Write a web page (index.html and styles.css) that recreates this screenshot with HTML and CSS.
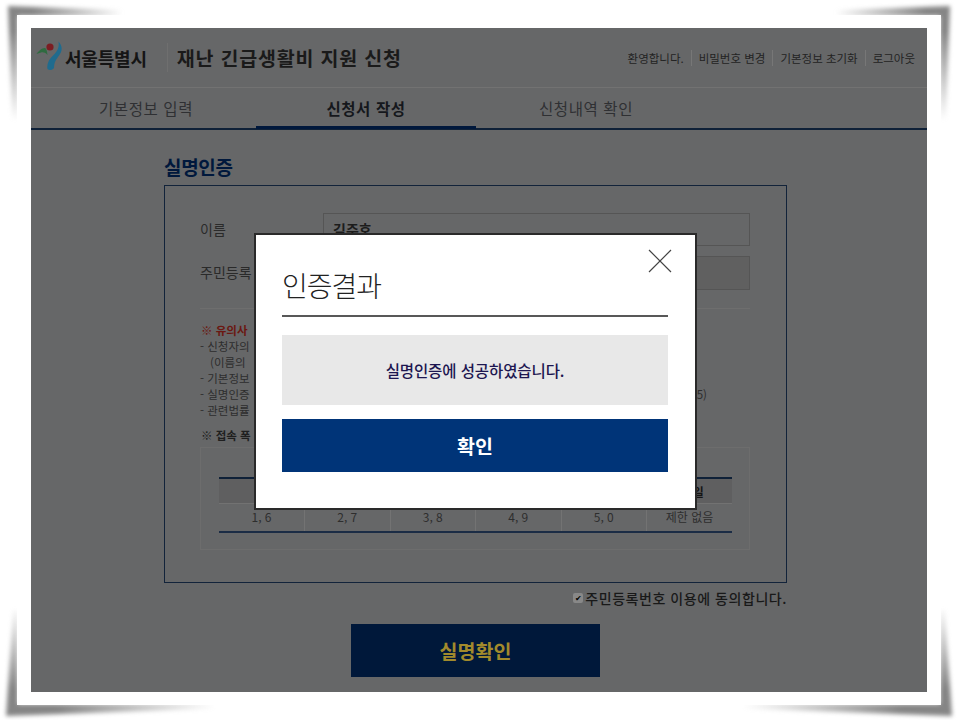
FILE: index.html
```html
<!DOCTYPE html>
<html lang="ko">

<head>
    <meta charset="UTF-8">
    <title>재난 긴급생활비 지원 신청</title>
    <link rel="stylesheet" href="styles.css">
</head>

<body>
    <div class="frame-shadow">
        <div class="curl curl-top"></div>
        <div class="curl curl-top curl-flip"></div>
        <div class="curl curl-bottom"></div>
        <div class="curl curl-bottom curl-flip"></div>
    </div>
    <div class="frame">
        <div class="page">
            <!-- Header -->
            <header class="header">
                <div class="brand">
                    <svg class="logo" viewBox="0 0 26 30" width="26" height="30">
                        <path d="M0.5 13C3 9.5 6.500 6.500 9 7C10.500 7.500 11 10 11.500 14C9.500 11.500 7 11 5 11.500C3.500 11.800 2 12.500 0.500 13Z" fill="#2f6b40" />
                        <circle cx="14" cy="6" r="3.600" fill="#7c1d22" />
                        <path d="M22.500 0.500C27 5 26.500 11 22 16C19 19.500 18 23 18 27C16 29.500 13 29.500 11.500 28C10.500 23 13 18 17.500 14C21 10.500 23.500 7 22.500 0.500Z" fill="#1f6b8e" />
                    </svg>
                    <span class="brand-name">서울특별시</span>
                    <span class="brand-title">재난 긴급생활비 지원 신청</span>
                </div>
                <ul class="user-menu">
                    <li>환영합니다.</li>
                    <li>비밀번호 변경</li>
                    <li>기본정보 초기화</li>
                    <li>로그아웃</li>
                </ul>
            </header>

            <!-- Tabs -->
            <nav class="tabs">
                <a class="tab">기본정보 입력</a>
                <a class="tab active">신청서 작성</a>
                <a class="tab">신청내역 확인</a>
            </nav>

            <!-- Real name check -->
            <main class="content">
                <h2 class="section-title">실명인증</h2>
                <div class="check-box">
                    <div class="form-row">
                        <label>이름</label>
                        <div class="field">김주호</div>
                    </div>
                    <div class="form-row">
                        <label>주민등록</label>
                        <div class="field field-disabled"></div>
                    </div>
                    <div class="notes">
                        <p class="notes-title">※ 유의사</p>
                        <p>- 신청자의</p>
                        <p class="indent">(이름의</p>
                        <p>- 기본정보</p>
                        <p class="note-split"><span>- 실명인증</span><span>5)</span></p>
                        <p>- 관련법률</p>
                    </div>
                    <p class="notes-title dark">※ 접속 폭</p>
                    <div class="table-box">
                        <table class="day-table">
                            <tr>
                                <th></th>
                                <th></th>
                                <th></th>
                                <th></th>
                                <th></th>
                                <th>토, 일</th>
                            </tr>
                            <tr>
                                <td>1, 6</td>
                                <td>2, 7</td>
                                <td>3, 8</td>
                                <td>4, 9</td>
                                <td>5, 0</td>
                                <td>제한 없음</td>
                            </tr>
                        </table>
                    </div>
                </div>
                <label class="agree"><span class="agree-check">✔</span>주민등록번호 이용에 동의합니다.</label>
                <button class="submit-btn">실명확인</button>
            </main>

            <!-- Result popup -->
            <div class="modal">
                <svg class="modal-close" viewBox="0 0 24 24" width="24" height="24">
                    <path d="M1 1L23 23M23 1L1 23" stroke="#444" stroke-width="1.200" fill="none" />
                </svg>
                <h3 class="modal-title">인증결과</h3>
                <div class="modal-msg">실명인증에 성공하였습니다.</div>
                <button class="modal-btn">확인</button>
            </div>
        </div>
    </div>
</body>

</html>
```

FILE: styles.css
```css
/* General Styles */
body {
    margin: 0;
    background-color: #fff;
    font-family: "Noto Sans CJK KR", "Noto Sans", sans-serif;
    position: relative;
    height: 720px;
    overflow: hidden;
}

p {
    margin: 0;
}

/* Curled shadow around the picture frame */
.frame-shadow {
    position: absolute;
    inset: 0;
    filter: blur(2px);
}

.curl {
    position: absolute;
    inset: 0;
    background-color: #858585;
}

.curl-top {
    clip-path: polygon(8px 6px, 150px 11px, 150px 16px, 18px 16px, 18px 120px, 12px 120px);
    -webkit-mask-image: radial-gradient(circle at 8px 6px, #000 25px, transparent 115px);
    mask-image: radial-gradient(circle at 8px 6px, #000 25px, transparent 115px);
}

.curl-bottom {
    clip-path: polygon(6px 716px, 230px 708px, 230px 704px, 18px 704px, 18px 610px, 13px 610px);
    -webkit-mask-image: radial-gradient(ellipse 210px 110px at 6px 716px, #000 25%, transparent 100%);
    mask-image: radial-gradient(ellipse 210px 110px at 6px 716px, #000 25%, transparent 100%);
}

.curl-flip {
    transform: scaleX(-1);
}

.frame {
    position: relative;
    width: 896px;
    height: 664px;
    margin: 15px 0 0 17px;
    padding: 13px 14px;
    background-color: #fff;
}

.page {
    position: relative;
    height: 664px;
    overflow: hidden;
    background-color: #666768;
    color: #222;
}

/* Header */
.header {
    display: flex;
    justify-content: space-between;
    align-items: center;
    height: 60px;
    box-sizing: border-box;
    padding: 0 12px 0 5px;
    border-bottom: 1px solid #727272;
}

.brand {
    display: flex;
    align-items: center;
}

.logo {
    margin-top: -4px;
}

.brand-name {
    margin-left: 3px;
    font-size: 18px;
    font-weight: 700;
    letter-spacing: -0.200px;
    color: #151515;
}

.brand-title {
    margin-left: 20px;
    padding-left: 9px;
    border-left: 1px solid #6f6f6f;
    font-size: 19.500px;
    font-weight: 700;
    letter-spacing: 0.800px;
    color: #1a1a1a;
}

.user-menu {
    display: flex;
    margin: 0;
    padding: 0;
    list-style: none;
    font-size: 11.500px;
    color: #232323;
}

.user-menu li + li {
    margin-left: 7px;
    padding-left: 7px;
    border-left: 1px solid #777;
}

/* Tabs */
.tabs {
    display: flex;
    height: 42px;
    box-sizing: border-box;
    padding-left: 5px;
    border-bottom: 2px solid #0f2138;
}

.tab {
    width: 220px;
    height: 40px;
    box-sizing: border-box;
    text-align: center;
    line-height: 40px;
    font-size: 15.500px;
    letter-spacing: 0.600px;
    color: #2f3033;
}

.tab.active {
    height: 41px;
    border-bottom: 3px solid #00183c;
    font-weight: 700;
    color: #15171c;
}

/* Content */
.content {
    display: flex;
    flex-direction: column;
    width: 623px;
    margin-left: 133px;
}

.section-title {
    margin: 25px 0 7px;
    height: 23px;
    line-height: 23px;
    font-size: 19px;
    font-weight: 700;
    letter-spacing: -0.300px;
    color: #00183c;
}

.check-box {
    height: 398px;
    box-sizing: border-box;
    padding: 27px 36px 0 35px;
    border: 1px solid #12233a;
}

.form-row {
    display: flex;
    align-items: center;
    margin-bottom: 10px;
}

.form-row label {
    width: 123px;
    font-size: 14px;
    margin-top: -2px;
    color: #2a2a2a;
}

.field {
    width: 427px;
    height: 33px;
    box-sizing: border-box;
    padding-left: 9px;
    line-height: 31px;
    border: 1px solid #555;
    font-size: 14px;
    font-weight: 700;
    color: #1c1c1c;
}

.field-disabled {
    height: 34px;
    background-color: #606060;
}

.notes {
    margin-top: 18px;
    padding-top: 14px;
    border-top: 1px solid #6e6e6e;
    font-size: 11.500px;
    line-height: 16px;
    color: #2d2d2d;
}

.notes-title {
    line-height: 15px;
    padding-left: 1px;
    font-weight: 700;
    color: #6b1712;
}

.notes-title.dark {
    margin-top: 9px;
    font-size: 11.500px;
    line-height: 16px;
    color: #1f1f1f;
}

.indent {
    padding-left: 10px;
}

.note-split {
    display: flex;
    justify-content: space-between;
    width: 507px;
}

/* Day table */
.table-box {
    height: 103px;
    box-sizing: border-box;
    margin-top: 4px;
    padding: 29px 18px 0;
    border: 1px solid #6d6d6d;
}

.day-table {
    width: 513px;
    border-collapse: collapse;
    table-layout: fixed;
    border-top: 2px solid #0f2138;
    border-bottom: 2px solid #1b2c45;
    font-size: 12px;
    text-align: center;
    color: #2e2e2e;
}

.day-table th {
    height: 24px;
    padding: 0;
    background-color: #5f5f60;
    border-bottom: 1px solid #727272;
    font-weight: 700;
    color: #151515;
}

.day-table td {
    height: 25px;
    padding: 0 0 2px;
    border-left: 1px solid #737373;
}

.day-table td:first-child {
    border-left: 0;
}

/* Agree + submit */
.agree {
    display: flex;
    align-items: center;
    justify-content: flex-end;
    height: 16px;
    margin-top: 7px;
    font-size: 14px;
    font-weight: 500;
    letter-spacing: 0.550px;
    color: #191919;
}

.agree-check {
    width: 10px;
    height: 10px;
    margin-right: 2px;
    background-color: #888;
    border-radius: 2px;
    font-size: 8px;
    line-height: 10px;
    text-align: center;
    color: #000;
}

.submit-btn {
    align-self: center;
    width: 249px;
    height: 53px;
    margin-top: 18px;
    padding: 0;
    border: none;
    background-color: #00183a;
    font-family: inherit;
    font-size: 19.500px;
    font-weight: 700;
    color: #a28a2c;
}

/* Result popup */
.modal {
    position: absolute;
    left: 223px;
    top: 205px;
    width: 443px;
    height: 277px;
    box-sizing: border-box;
    padding: 0 27px 0 26px;
    background-color: #fff;
    border: 2px solid #2a2a2a;
}

.modal-close {
    position: absolute;
    left: 392px;
    top: 14px;
}

.modal-title {
    height: 82px;
    margin: 0;
    box-sizing: border-box;
    padding: 29px 0 0;
    line-height: 42px;
    border-bottom: 2px solid #585858;
    font-size: 28px;
    font-weight: 300;
    letter-spacing: -1px;
    color: #222;
}

.modal-msg {
    height: 70px;
    margin-top: 18px;
    background-color: #e8e8e8;
    line-height: 70px;
    text-align: center;
    font-size: 15.500px;
    font-weight: 500;
    letter-spacing: -0.100px;
    color: #1d1650;
}

.modal-btn {
    display: block;
    width: 100%;
    height: 53px;
    margin-top: 14px;
    padding: 0;
    border: none;
    background-color: #003478;
    font-family: inherit;
    font-size: 19.500px;
    font-weight: 700;
    color: #fff;
}
```
